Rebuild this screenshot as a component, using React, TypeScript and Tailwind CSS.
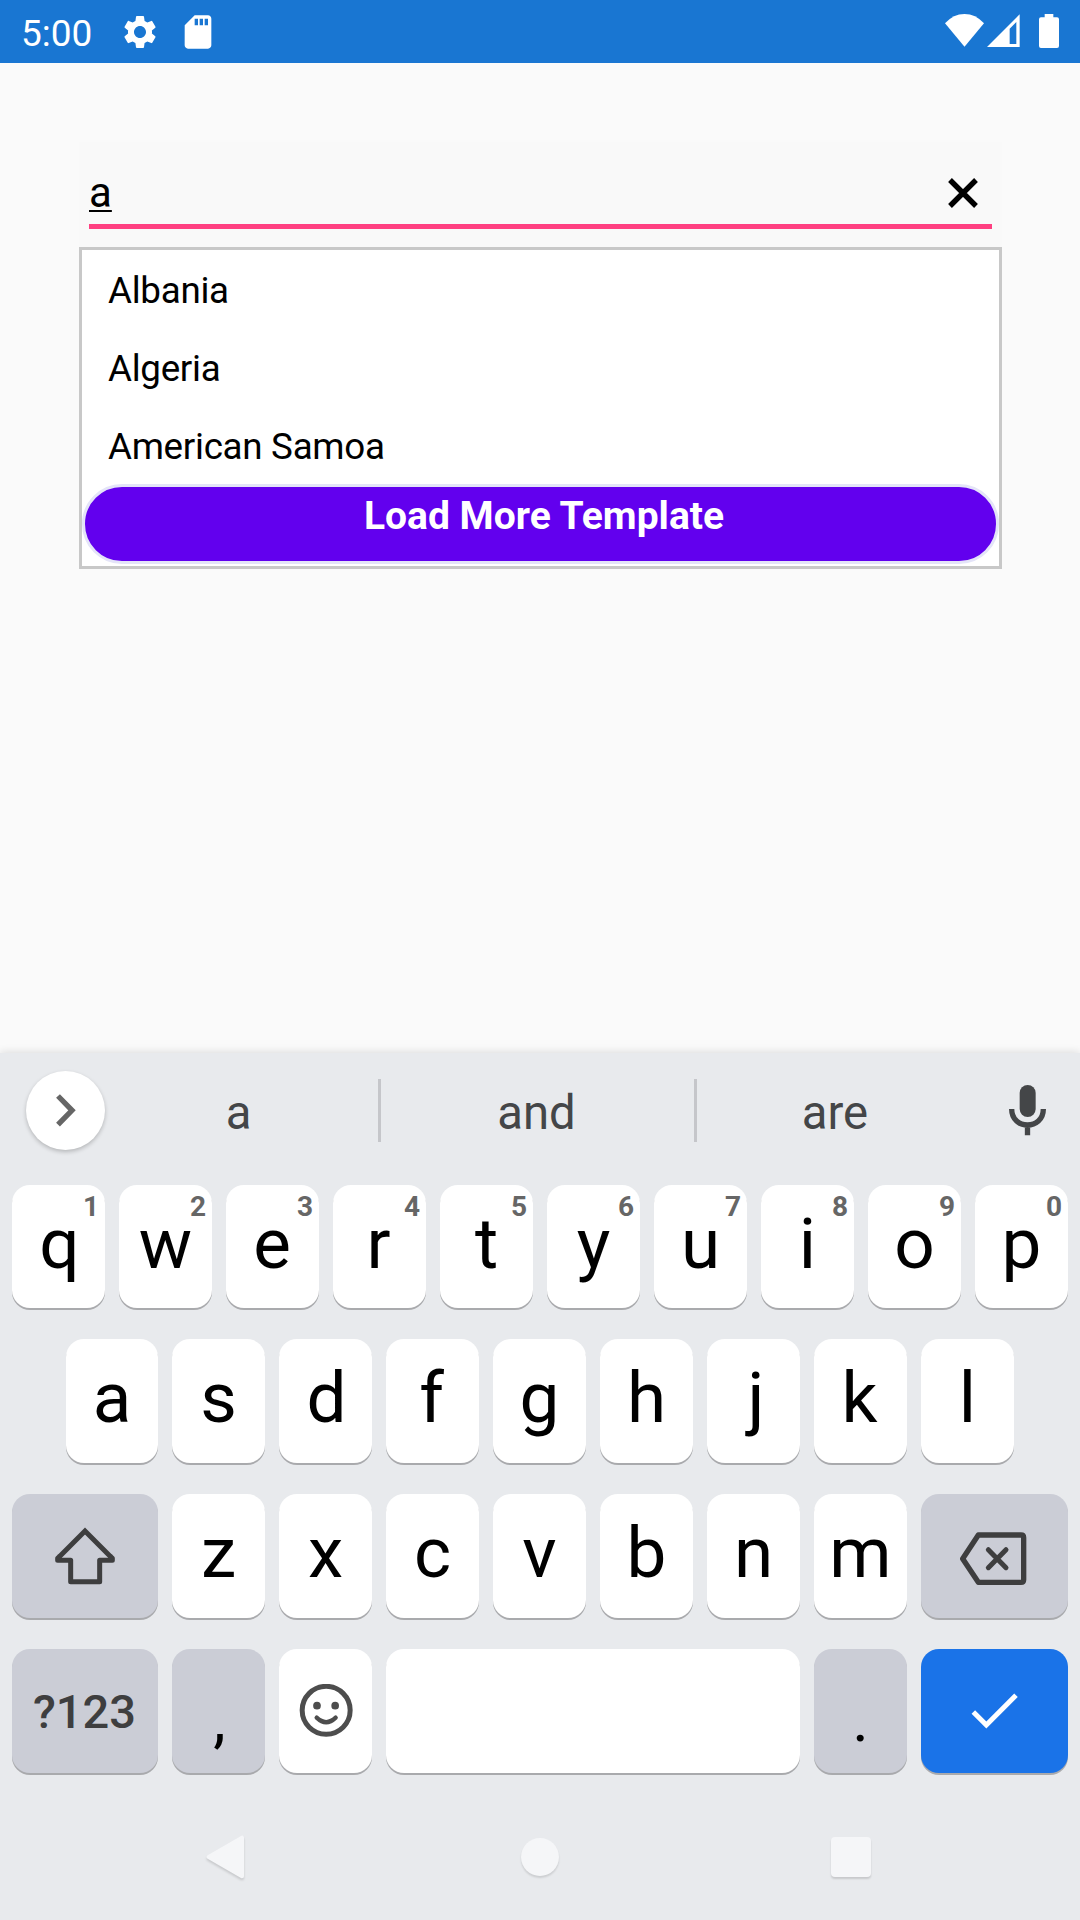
import type { ReactNode } from "react";
import { MdSdCard, MdSettings } from "react-icons/md";

function StatusBar() {
  return (
    <header className="flex h-[63px] items-start bg-[#1976d2] text-white">
      <span className="ml-[21px] w-[72px] text-[37px] leading-[67px]">5:00</span>
      <MdSettings className="mt-[11.5px] ml-[27px] size-[40px]" />
      <MdSdCard className="mt-[11.5px] ml-[18px] size-[40px]" />
      <svg className="mt-[14px] ml-auto" width="39" height="33" viewBox="555 42 117 99" fill="currentColor">
        <path d="M613.500 140 L555 70 Q580 42 613.500 42 Q647 42 672 70 Z" />
      </svg>
      <svg className="mt-[14px] ml-[3px]" width="33" height="33" viewBox="682 42 99 99" fill="currentColor">
        <path fillRule="evenodd" d="M682 141 L780 43 V141 Z M750 86 V132 H770 V66 Z" />
      </svg>
      <svg className="mt-[14px] mr-[21px] ml-[19px]" width="20" height="34" viewBox="837 42 60 102" fill="currentColor">
        <path d="M854 42 H880 V52 H891 Q897 52 897 58 V138 Q897 144 891 144 H843 Q837 144 837 138 V58 Q837 52 843 52 H854 Z" />
      </svg>
    </header>
  );
}

const countries = ["Albania", "Algeria", "American Samoa"];

function Autocomplete() {
  return (
    <section className="mr-[78px] ml-[79px] mt-[79px] flex flex-col bg-[#f9f9f9]">
      <div className="mx-[10px] mb-[18px] flex h-[87px] items-start justify-between border-b-[5px] border-[#ff4081]">
        <span className="mt-[21px] text-[42px] leading-[60px] text-black underline decoration-2 underline-offset-[3px]">a</span>
        <svg className="mt-[36px] mr-[14px]" width="30" height="30" viewBox="564 534 90 90" fill="none" stroke="#000" strokeWidth="16">
          <path d="M570 540 L648 618 M648 540 L570 618" />
        </svg>
      </div>
      <div className="flex h-[322px] flex-col border-[3px] border-[#c8c8c8] bg-white pt-[2px]">
        {countries.map((name) => (
          <div key={name} className="h-[78px] shrink-0 pl-[26px] text-[36.75px] leading-[78px] tracking-[-0.29px] text-black">
            {name}
          </div>
        ))}
        <button className="mt-[-2px] h-[80px] shrink-0 rounded-full border-[3px] border-[#e4e4f8] bg-[#6200ee] pb-[16px] pl-[7px] text-[39px] leading-[58px] font-bold text-white">
          Load More Template
        </button>
      </div>
    </section>
  );
}

function Key({ children, className = "w-[93px] bg-white", row = "h-[124px]" }: { children?: ReactNode; className?: string; row?: string }) {
  return (
    <button className={`flex shrink-0 items-start justify-center rounded-[18px] shadow-[0_2px_0_#a9aaad] ${row} ${className}`}>
      {children}
    </button>
  );
}

// Optical centring for glyphs with uneven side bearings.
const opticalShift: Record<string, string> = {
  q: "pl-[2px]",
  d: "pl-[2px]",
  j: "pl-[5px]",
  e: "pr-[1px]",
  r: "pr-[2px]",
  f: "pr-[2px]",
  k: "pr-[2px]",
};

function Letter({ children }: { children: string }) {
  return <span className={`text-[71px] leading-[118px] text-black ${opticalShift[children] ?? ""}`}>{children}</span>;
}

function SuggestionStrip() {
  return (
    <div className="flex h-[132px] items-start pt-[18px] text-[47.25px] leading-[84px] text-[#444648]">
      <button className="ml-[26px] flex size-[79px] items-center justify-center rounded-full bg-white pl-[2px] shadow-[0_2px_4px_rgba(0,0,0,0.22)]">
        <svg width="21" height="33" viewBox="168 193 63 99" fill="none" stroke="#666" strokeWidth="16">
          <path d="M174 199 L216 242 L174 285" />
        </svg>
      </button>
      <span className="ml-[-5px] w-[278px] pr-px text-center">a</span>
      <span className="mt-[8px] h-[63px] w-[3px] bg-[#c5c6ca]" />
      <span className="w-[313px] pr-[2px] text-center">and</span>
      <span className="mt-[8px] h-[63px] w-[3px] bg-[#c5c6ca]" />
      <span className="w-[276px] text-center">are</span>
      <svg className="mt-[14px] ml-[36px]" width="37" height="51" viewBox="927 165 111 153" fill="#444648">
        <rect x="959" y="165" width="48" height="96" rx="24" />
        <path d="M935 237 C935 301 1030 301 1030 237 M982.500 285 V316" fill="none" stroke="#444648" strokeWidth="16" />
      </svg>
    </div>
  );
}

function Keyboard() {
  return (
    <section className="h-[739px] bg-[#e8eaed] shadow-[0_-1px_8px_rgba(0,0,0,0.12)]">
      <SuggestionStrip />
      <div className="flex flex-col gap-[31px] px-[12px]">
        <div className="flex gap-[14px]">
          {[..."qwertyuiop"].map((letter, i) => (
            <Key key={letter} row="relative h-[123px]">
              <Letter>{letter}</Letter>
              <span className="absolute top-[5px] right-[6px] text-[28px] leading-[34px] font-bold text-[#666]">{(i + 1) % 10}</span>
            </Key>
          ))}
        </div>
        <div className="flex gap-[14px] pl-[54px]">
          {[..."asdfghjkl"].map((letter, i) => (
            <Key key={letter} className={i === 0 ? "w-[92px] bg-white" : "w-[93px] bg-white"}>
              <Letter>{letter}</Letter>
            </Key>
          ))}
        </div>
        <div className="flex gap-[14px]">
          <Key className="w-[146px] bg-[#cbcdd6]">
            <svg className="mt-[33px]" width="60" height="58" viewBox="165 619 180 174" fill="none" stroke="#3e3e3f" strokeWidth="15">
              <path d="M178 708 L255 631 L332 708" />
              <path d="M180 706 L173 713 V719 H212 V783 H299 V719 H337 V713 L330 706" strokeLinejoin="round" />
            </svg>
          </Key>
          {[..."zxcvbnm"].map((letter) => (
            <Key key={letter}>
              <Letter>{letter}</Letter>
            </Key>
          ))}
          <Key className="w-[147px] bg-[#cbcdd6]">
            <svg className="mt-[38px] mr-[4px]" width="68" height="54" viewBox="778 636 204 162" fill="none" stroke="#3e3e3f" strokeWidth="16" strokeLinejoin="round">
              <path d="M836 645 H964 Q972 645 972 653 V779 Q972 787 964 787 H836 L789 716 Z" />
              <path d="M866 689 L919 743 M919 689 L866 743" strokeWidth="15" strokeLinecap="round" />
            </svg>
          </Key>
        </div>
        <div className="flex gap-[14px]">
          <Key className="w-[146px] bg-[#cbcdd6]">
            <span className="mr-[1px] text-[47px] leading-[126px] font-medium text-[#3e3e3f]">?123</span>
          </Key>
          <Key className="w-[93px] bg-[#cbcdd6]">
            <span className="ml-[2px] text-[63px] leading-[141px] text-black">,</span>
          </Key>
          <Key>
            <svg className="mt-[35px]" width="54" height="54" viewBox="895 192 162 162" fill="#4d4d4d">
              <circle cx="976.500" cy="271" r="72" fill="none" stroke="#4d4d4d" strokeWidth="15" />
              <circle cx="949" cy="257" r="11.500" />
              <circle cx="1003.500" cy="257" r="11.500" />
              <path d="M948 293 Q976.500 320 1005 293" fill="none" stroke="#4d4d4d" strokeWidth="13" strokeLinecap="round" />
            </svg>
          </Key>
          <Key className="w-[414px] bg-white" />
          <Key className="w-[93px] bg-[#cbcdd6]">
            <span className="text-[63px] leading-[141px] text-black">.</span>
          </Key>
          <Key className="w-[147px] bg-[#1a73e8]">
            <svg className="mt-[44px]" width="48" height="36" viewBox="814 219 144 108" fill="none" stroke="#fff" strokeWidth="15">
              <path d="M821 276 L860 315 L949 226" />
            </svg>
          </Key>
        </div>
      </div>
    </section>
  );
}

function NavigationBar() {
  return (
    <footer className="flex h-[128px] items-start bg-[#e8eaed]">
      <svg className="mt-[38px] ml-[200px] overflow-visible drop-shadow-[0_2px_1px_rgba(0,0,0,0.14)]" width="50" height="54" viewBox="600 630 150 162" fill="#f5f6f8" stroke="#f5f6f8" strokeWidth="12" strokeLinejoin="round">
        <path d="M626 711 L726 653 V769 Z" />
      </svg>
      <span className="mt-[46px] ml-[271px] size-[38px] rounded-full bg-[#f5f6f8] shadow-[0_2px_2px_rgba(0,0,0,0.12)]" />
      <span className="mt-[45px] ml-[272px] size-[40px] rounded-[4px] bg-[#f5f6f8] shadow-[0_2px_2px_rgba(0,0,0,0.14)]" />
    </footer>
  );
}

export default function App() {
  return (
    <main className="flex h-[1920px] w-[1080px] flex-col overflow-hidden bg-[#fafafa] font-[Roboto,sans-serif]">
      <StatusBar />
      <Autocomplete />
      <div className="mt-auto">
        <Keyboard />
        <NavigationBar />
      </div>
    </main>
  );
}
